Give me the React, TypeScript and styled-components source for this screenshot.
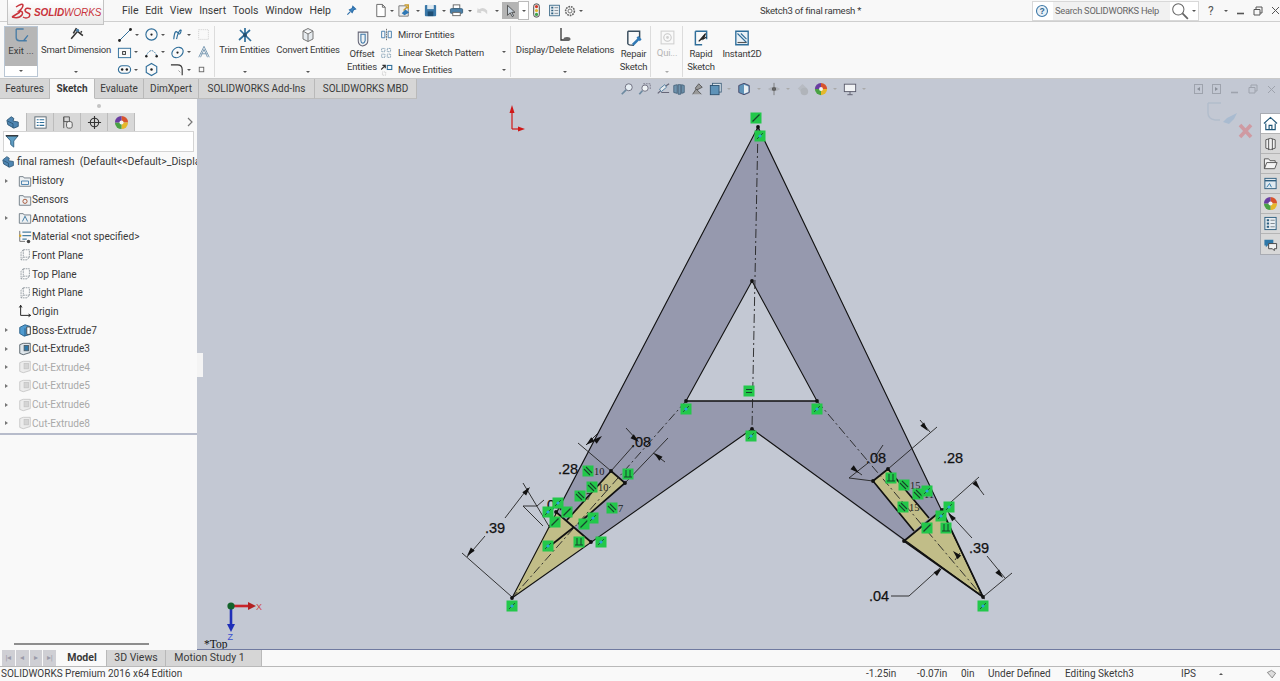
import { FC, ReactNode } from "react";
import styled, { createGlobalStyle } from "styled-components";

const GlobalStyle = createGlobalStyle`
  html, body { margin: 0; padding: 0; background: #f9f9f9; overflow: hidden; }
  body { font-family: Roboto, "Open Sans", sans-serif; font-size: 10.5px; color: #3a3a3a; }
  * { box-sizing: border-box; }
`;

const VIEW_BG = "#c3c8d3";

const Window = styled.div`
  width: 1280px;
  height: 681px;
  display: flex;
  flex-direction: column;
  overflow: hidden;
`;

/* ---------- title bar ---------- */
const TitleBar = styled.div`
  height: 22px;
  flex: none;
  display: flex;
  align-items: center;
  background: #f8f8f8;
  border-bottom: 1px solid #cfcfcf;
  position: relative;
  z-index: 2;
`;

const Logo = styled.div`
  width: 97px;
  height: 25px;
  margin: 0 0 -3px 7px;
  align-self: flex-start;
  display: flex;
  align-items: center;
  gap: 1px;
  padding-left: 3px;
  background: linear-gradient(#ffffff, #e9e9e9);
  border: 1px solid #c4c4c4;
  border-top: none;
  flex: none;
`;

const LogoText = styled.span`
  font-family: "Liberation Sans", sans-serif;
  font-size: 10px;
  font-style: italic;
  letter-spacing: -0.1px;
  color: #c9343c;
  white-space: nowrap;
  b { font-weight: 700; }
`;

const Menu = styled.div`
  display: flex;
  justify-content: space-between;
  width: 209px;
  margin-left: 18px;
  font-size: 10.5px;
  flex: none;
`;

const Quick = styled.div`
  display: flex;
  align-items: center;
  margin-left: 15px;
  flex: none;
`;

const QuickSlot = styled.span<{ $w: number; $on?: boolean; $box?: boolean; $ml?: number }>`
  width: ${(p) => p.$w}px;
  height: 17px;
  margin-left: ${(p) => p.$ml ?? 0}px;
  display: flex;
  align-items: center;
  justify-content: center;
  flex: none;
  background: ${(p) => (p.$on ? "#b4b4b4" : p.$box ? "#fff" : "transparent")};
  outline: ${(p) => (p.$box ? "1px solid #bbb" : "none")};
`;

const Caret = styled.span<{ $light?: boolean; $up?: boolean }>`
  display: inline-block;
  width: 0;
  height: 0;
  border-left: 2px solid transparent;
  border-right: 2px solid transparent;
  border-top: 2px solid ${(p) => (p.$light ? "#a9a9a9" : "#555")};
  transform: ${(p) => (p.$up ? "rotate(180deg)" : "none")};
  flex: none;
`;

const DocTitle = styled.div`
  position: absolute;
  left: 760px;
  top: 4px;
  font-size: 9.6px;
  letter-spacing: -0.25px;
  line-height: 13px;
  white-space: nowrap;
`;

const Search = styled.div`
  margin-left: auto;
  width: 167px;
  height: 20px;
  margin-right: 6px;
  display: flex;
  align-items: center;
  border: 1px solid #d8d8d8;
  background: #fff;
  flex: none;
`;

const SearchField = styled.div`
  width: 117px;
  height: 100%;
  margin-left: 3px;
  padding-left: 2px;
  background: #f1f1f1;
  color: #666;
  font-size: 9.3px;
  letter-spacing: -0.25px;
  line-height: 18px;
  white-space: nowrap;
`;

const WinButtons = styled.div`
  display: flex;
  align-items: center;
  gap: 8px;
  width: 75px;
  flex: none;
  padding-left: 3px;
  color: #555;
`;

const HelpMark = styled.span`
  font-size: 12px;
  margin-right: 2px;
`;

/* ---------- ribbon ---------- */
const Ribbon = styled.div`
  height: 57px;
  flex: none;
  display: flex;
  padding: 4px 0 1px 4px;
  background: #f9f9f9;
  border-bottom: 1px solid #c9c9c9;
`;

const ExitButton = styled.div`
  width: 34px;
  display: flex;
  flex-direction: column;
  border: 1px solid #b9c6d4;
  flex: none;
`;

const ExitTop = styled.div`
  height: 39px;
  background: #b6b6b6;
  display: flex;
  flex-direction: column;
  align-items: center;
  padding-top: 1px;
  font-size: 9.5px;
  line-height: 12px;
  white-space: nowrap;
`;

const ExitBottom = styled.div`
  flex: 1;
  background: #fff;
  display: flex;
  align-items: center;
  justify-content: center;
`;

const Tool = styled.div<{ $w: number; $gap?: number; $off?: boolean }>`
  width: ${(p) => p.$w}px;
  margin-left: ${(p) => p.$gap ?? 0}px;
  flex: none;
  display: flex;
  flex-direction: column;
  align-items: center;
  font-size: 9.5px;
  letter-spacing: -0.2px;
  line-height: 13px;
  text-align: center;
  white-space: nowrap;
  color: ${(p) => (p.$off ? "#b5b5b5" : "#3a3a3a")};
`;

const ToolIcon = styled.div<{ $h: number }>`
  height: ${(p) => p.$h}px;
  display: flex;
  align-items: flex-end;
  justify-content: center;
  flex: none;
`;

const ToolCaret = styled.div`
  margin-top: auto;
  height: 10px;
  display: flex;
  align-items: center;
  justify-content: center;
`;

const Divider = styled.div<{ $gap: number }>`
  width: 1px;
  margin: 0 ${(p) => p.$gap}px 0 3px;
  background: #dcdcdc;
  flex: none;
`;

const SmallGrid = styled.div`
  width: 94px;
  margin-left: 5px;
  flex: none;
  display: grid;
  grid-template-columns: repeat(3, 26.7px) 14px;
  grid-auto-rows: 17.5px;
  align-items: center;
`;

const SmallCell = styled.div`
  display: flex;
  align-items: center;
  gap: 2px;
`;

const Stack = styled.div`
  width: 127px;
  margin-left: 2px;
  flex: none;
  display: grid;
  grid-auto-rows: 17.5px;
  align-items: center;
`;

const StackRow = styled.div`
  display: flex;
  align-items: center;
  gap: 5px;
  font-size: 9.4px;
  letter-spacing: -0.15px;
  white-space: nowrap;
`;

const StackCaret = styled.span`
  margin-left: auto;
  margin-right: 1px;
  display: flex;
`;

/* ---------- tabs over the graphics area ---------- */
const TabRow = styled.div`
  height: 20px;
  flex: none;
  display: flex;
  align-items: flex-start;
  background: ${VIEW_BG};
`;

const CmdTab = styled.div<{ $w: number; $active?: boolean }>`
  width: ${(p) => p.$w}px;
  height: 20px;
  flex: none;
  font-size: 10px;
  line-height: 20px;
  text-align: center;
  white-space: nowrap;
  background: ${(p) => (p.$active ? "#f9f9f9" : "#d6d6d6")};
  font-weight: ${(p) => (p.$active ? 700 : 400)};
  border-right: 1px solid #b9b9b9;
  border-bottom: 1px solid ${(p) => (p.$active ? "#f9f9f9" : "#bdbdbd")};
`;

const HeadsUp = styled.div`
  display: flex;
  align-items: center;
  height: 20px;
  margin-left: 201px;
  flex: none;
`;

const HudSlot = styled.span<{ $w: number }>`
  width: ${(p) => p.$w}px;
  display: flex;
  align-items: center;
  justify-content: center;
  flex: none;
`;

const ViewButtons = styled.div`
  margin-left: 326px;
  height: 20px;
  display: flex;
  align-items: center;
  gap: 9px;
  flex: none;
`;

/* ---------- main area ---------- */
const Body = styled.div`
  flex: 1;
  min-height: 0;
  display: flex;
`;

const Sidebar = styled.div`
  width: 197px;
  flex: none;
  display: flex;
  flex-direction: column;
  background: #f9f9f9;
  position: relative;
`;

const Grip = styled.div`
  height: 14px;
  display: flex;
  align-items: center;
  justify-content: center;
  flex: none;
`;

const GripDot = styled.span`
  width: 4px;
  height: 4px;
  border-radius: 50%;
  background: #c4c4c4;
`;

const PanelTabs = styled.div`
  height: 18px;
  display: flex;
  align-items: center;
  flex: none;
`;

const PanelTab = styled.div<{ $active?: boolean }>`
  width: 27px;
  height: 18px;
  flex: none;
  display: flex;
  align-items: center;
  justify-content: center;
  background: ${(p) => (p.$active ? "#f9f9f9" : "#d8d8d8")};
  border-right: 1px solid #bcbcbc;
`;

const PanelMore = styled.div`
  margin-left: auto;
  margin-right: 4px;
  display: flex;
`;

const FilterBox = styled.div`
  height: 21px;
  margin: 0 3px 0 3px;
  padding: 2px 0 0 1px;
  background: #fff;
  border: 1px solid #d4d4d4;
  flex: none;
`;

const Tree = styled.div`
  display: grid;
  grid-template-rows: 19.6px;
  grid-auto-rows: 18.65px;
  border-bottom: 2px solid #b7bccb;
  flex: none;
`;

const TreeRow = styled.div<{ $root?: boolean; $off?: boolean }>`
  display: flex;
  align-items: center;
  padding-left: ${(p) => (p.$root ? 2 : 4)}px;
  font-size: ${(p) => (p.$root ? 10.5 : 10.1)}px;
  white-space: nowrap;
  color: ${(p) => (p.$off ? "#a9a9a9" : "#3a3a3a")};
`;

const Expander = styled.span<{ $show: boolean }>`
  width: 0;
  height: 0;
  margin-right: 9px;
  margin-left: 1px;
  flex: none;
  border-top: 2.5px solid transparent;
  border-bottom: 2.5px solid transparent;
  border-left: 3px solid ${(p) => (p.$show ? "#777" : "transparent")};
`;

const TreeIcon = styled.span<{ $root?: boolean }>`
  width: ${(p) => (p.$root ? 12 : 15)}px;
  height: 15px;
  margin-right: ${(p) => (p.$root ? 3 : 0)}px;
  display: flex;
  align-items: center;
  justify-content: center;
  flex: none;
`;

const SideScroll = styled.div`
  margin: auto 48px 5px 14px;
  height: 2px;
  background: #8e8e8e;
  flex: none;
`;

const Splitter = styled.div`
  position: absolute;
  right: -6px;
  top: 254px;
  width: 6px;
  height: 24px;
  background: #f4f4f4;
  z-index: 2;
`;

const Viewport = styled.div`
  flex: 1;
  position: relative;
  background: ${VIEW_BG};
  border-bottom: 1px solid #6f7aa0;
`;

const Canvas = styled.svg`
  display: block;
  width: 100%;
  height: 100%;
`;

const TaskPane = styled.div`
  position: absolute;
  top: 14px;
  right: 0;
  width: 20px;
  display: flex;
  flex-direction: column;
  border: 1px solid #a9acb3;
  border-right: none;
`;

const TaskButton = styled.div<{ $active?: boolean }>`
  height: 20px;
  display: flex;
  align-items: center;
  justify-content: center;
  background: ${(p) => (p.$active ? "#fff" : "#d8d8d8")};
  border-bottom: 1px solid #b5b5b5;
  &:last-child { border-bottom: none; }
`;

/* ---------- bottom ---------- */
const SheetRow = styled.div`
  height: 17px;
  flex: none;
  display: flex;
  padding-left: 2px;
  background: #f9f9f9;
  border-bottom: 1px solid #b9b9b9;
`;

const NavButtons = styled.div`
  width: 54px;
  margin-right: 2px;
  display: grid;
  grid-template-columns: repeat(4, 1fr);
  gap: 1px;
  flex: none;
`;

const NavButton = styled.div`
  background: #cfcfd4;
  color: #9a9aa8;
  font-size: 8px;
  line-height: 15px;
  text-align: center;
`;

const SheetTab = styled.div<{ $w: number; $active?: boolean; $pr?: number }>`
  width: ${(p) => p.$w}px;
  padding-right: ${(p) => p.$pr ?? 0}px;
  flex: none;
  text-align: center;
  font-size: 10.5px;
  line-height: 16px;
  white-space: nowrap;
  font-weight: ${(p) => (p.$active ? 700 : 400)};
  background: ${(p) => (p.$active ? "#f9f9f9" : "#d6d6d6")};
  border-right: 1px solid #b9b9b9;
`;

const StatusBar = styled.div`
  height: 14px;
  flex: none;
  display: flex;
  align-items: center;
  font-size: 10px;
  line-height: 14px;
  background: #f9f9f9;
  white-space: nowrap;
`;

const StatusCell = styled.span<{ $x: number }>`
  position: absolute;
  left: ${(p) => p.$x}px;
  display: flex;
  align-items: center;
`;

const StatusTrack = styled.div`
  position: relative;
  flex: 1;
  height: 14px;
  display: flex;
  align-items: center;
  padding-left: 1px;
`;

/* ---------- small drawings ---------- */
type IconProps = { size?: number };

const Svg = styled.svg`
  display: block;
  flex: none;
`;

const S: FC<{ size?: number; children: ReactNode }> = ({ size = 16, children }) => (
  <Svg width={size} height={size} viewBox="0 0 16 16" fill="none">
    {children}
  </Svg>
);

const DsMark = () => (
  <Svg width="22" height="20" viewBox="0 0 22 20">
    <path d="M1 15 L9 10 M5 5 Q11 1 12 3 Q12 6 8 9 Q13 9 11 13 Q8 17 1 15" stroke="#c9343c" strokeWidth="1.5" fill="none" />
    <path d="M20 7 Q15 5 14 8 Q14 10 17 11 Q20 12 18 15 Q15 17 12 15" stroke="#c9343c" strokeWidth="1.5" fill="none" />
  </Svg>
);

const Pin = () => (
  <S size={11}><path d="M10 2 L14 6 L11 7 L9 11 L5 7 L9 5 Z M6 10 L2 14" stroke="#2c6da8" strokeWidth="1.6" fill="#3f88c5" /></S>
);
const NewDoc = () => (
  <S size={15}><path d="M4 1.5 H10 L13 4.5 V14.5 H4 Z M10 1.5 V4.5 H13" stroke="#666" fill="#fff" /></S>
);
const OpenDoc = () => (
  <S size={15}><path d="M2 3 H9 L12 6 V14 H2 Z" stroke="#777" fill="#eee" /><path d="M7 8 L11 4 M8 2 H12 V6" stroke="#c79a2c" strokeWidth="1.6" /><path d="M5 11 L9 7 L13 10 L8 13 Z" fill="#2f78b5" /></S>
);
const Save = () => (
  <S size={15}><rect x="2" y="2" width="12" height="12" rx="1" fill="#3a78a8" /><rect x="4.5" y="2" width="7" height="4.5" fill="#dfe9f0" /><rect x="5" y="9" width="6" height="5" fill="#1f4f75" /></S>
);
const Printer = () => (
  <S size={15}><rect x="4.5" y="2" width="7" height="4" fill="#fff" stroke="#666" /><rect x="1.5" y="6" width="13" height="5" rx="1" fill="#4a7fa8" stroke="#3d6480" /><rect x="4" y="10" width="8" height="3.5" fill="#fff" stroke="#666" /></S>
);
const Undo = () => (
  <S size={15}><path d="M4 7 Q9 3 13 8 L13 12 Q9 7 6 9 L7 11 L2 10 L3 5 Z" fill="#d4d4d4" /></S>
);
const Cursor = () => (
  <S size={14}><path d="M4 1.5 V13 L7 10 L9.5 14.5 L11 13.5 L8.8 9.5 H12.5 Z" fill="#c9d3dc" stroke="#3b3b3b" strokeWidth="0.9" /></S>
);
const Traffic = () => (
  <S size={15}><rect x="5" y="1" width="6" height="14" rx="2.5" fill="#f2f2f2" stroke="#444" /><circle cx="8" cy="3.8" r="1.7" fill="#d23a2a" /><circle cx="8" cy="8" r="1.7" fill="#e3b52a" /><circle cx="8" cy="12.2" r="1.7" fill="#3fa34a" /></S>
);
const ListDoc: FC<IconProps> = ({ size = 15 }) => (
  <S size={size}><rect x="2" y="1.5" width="12" height="13" fill="#e9eef2" stroke="#2d5f80" /><path d="M4 4.5 H6.5 M4 8 H6.5 M4 11.5 H6.5" stroke="#2d5f80" strokeWidth="2" /><path d="M8 4.5 H12.5 M8 8 H12.5 M8 11.5 H12.5" stroke="#77838c" /></S>
);
const Gear = () => (
  <S size={14}><circle cx="8" cy="8" r="5" stroke="#666" strokeWidth="1.8" strokeDasharray="2 1" /><circle cx="8" cy="8" r="2.3" stroke="#666" /></S>
);
const HelpDot = () => (
  <Svg width="14" height="14" viewBox="0 0 14 14">
    <circle cx="7" cy="7" r="5.5" fill="#e8f0f6" stroke="#3f79a8" strokeWidth="1.1" />
    <text x="7" y="10" textAnchor="middle" fontSize="8.5" fontWeight="700" fontFamily="Liberation Sans, sans-serif" fill="#2d6594">?</text>
  </Svg>
);
const Loupe = () => (
  <S size={18}><circle cx="6.5" cy="6.5" r="5" stroke="#666" strokeWidth="0.9" /><path d="M10.2 10.2 L15 15" stroke="#666" strokeWidth="1.6" /></S>
);
const ExitIcon = () => (
  <S size={17}><path d="M3 1 V9 Q3 12 6 12 H13 M3 1 H10" stroke="#4b7ea6" strokeWidth="1.3" /><path d="M14 7 L10 12" stroke="#3f78a8" strokeWidth="1.2" /></S>
);
const DimIcon = () => (
  <S size={17}><path d="M3 12 L9 5 L14 9 M5 7 L8 2 M12 5 L13 6" stroke="#333" strokeWidth="1.5" /><circle cx="9" cy="4" r="1.5" fill="#4b7ea6" /></S>
);
const TrimIcon = () => (
  <S size={16}><path d="M2 13 L13 3 M3 3 L14 14 M8 1 V15" stroke="#2f6e9a" strokeWidth="1.7" /><circle cx="8" cy="8" r="2" fill="#244f70" /></S>
);
const ConvertIcon = () => (
  <S size={16}><path d="M3 4 L8 1.5 L13 4 V12 L8 14.5 L3 12 Z M8 7 V14.5 M3 4 L8 7 L13 4" stroke="#777" fill="#e6ebef" /></S>
);
const OffsetIcon = () => (
  <S size={17}><path d="M4 2 H13 V10 Q13 14 8 15 Q4 14 4 10 Z" stroke="#667" fill="#eef1f3" /><path d="M6.5 4 H10.5 V10 Q10 12 8.5 12.5 Q6.5 12 6.5 10 Z" stroke="#3f78a8" /></S>
);
const MirrorIcon = () => (
  <S size={13}><path d="M8 1 V15" stroke="#555" strokeDasharray="2 1" /><path d="M2 4 H6 V12 H2 Z M10 4 H14 V12 H10 Z" stroke="#3f78a8" strokeWidth="1.1" /></S>
);
const PatternIcon = () => (
  <S size={13}><path d="M2 3 H6 V7 H2 Z M9 3 H13 V7 H9 Z M2 10 H6 V14 H2 Z M9 10 H13 V14 H9 Z" stroke="#6d8fa8" strokeDasharray="1.3 .7" /></S>
);
const MoveIcon = () => (
  <S size={13}><path d="M1.5 8 L6 3.5 M3 3 H6.5 V6.5" stroke="#333" strokeWidth="1.4" /><rect x="9" y="3" width="5.5" height="5" stroke="#2f6e9a" strokeWidth="1.3" /><path d="M3 11 H7 V15 H3 Z" stroke="#bbb" strokeDasharray="1 1" /></S>
);
const RelationIcon = () => (
  <S size={16}><path d="M4 1 V13 H11" stroke="#333" strokeWidth="1.3" /><ellipse cx="10" cy="12" rx="3.5" ry="2" fill="#666" /></S>
);
const RepairIcon = () => (
  <S size={18}><path d="M2.5 2 H13 V8 M2.5 2 V13 Q3 14.5 8 14.5" stroke="#3a4e5e" strokeWidth="1.3" /><path d="M7 14 L12 9 M11 7 L14 10" stroke="#2f78b5" strokeWidth="2.2" /></S>
);
const QuickIcon = () => (
  <S size={17}><rect x="2" y="2" width="12" height="12" stroke="#d0d0d0" /><circle cx="8" cy="8" r="3.5" stroke="#c8c8c8" /><circle cx="8" cy="8" r="1.3" fill="#d0d0d0" /></S>
);
const RapidIcon = () => (
  <S size={18}><path d="M3 2 H13 V9 M3 2 V14 H9" stroke="#2f6e9a" strokeWidth="1.3" /><path d="M6 11 L12 4 L10 9 L13 7" fill="#222" stroke="#222" /></S>
);
const InstantIcon = () => (
  <S size={18}><path d="M2.5 2 H13.5 V14 H2.5 Z" stroke="#2f6e9a" strokeWidth="1.2" fill="#eaf1f6" /><path d="M4 4 L12 12 M7 4 L12 9" stroke="#2f6e9a" /><path d="M4 12 H12" stroke="#555" /></S>
);

const SmallIcons: { node: ReactNode; caret?: boolean }[] = [
  { caret: true, node: <S size={16}><path d="M2 14 L14 2" stroke="#2f6e9a" strokeWidth="1" /><circle cx="2.5" cy="13.5" r="1.4" fill="#222" /><circle cx="13.5" cy="2.5" r="1.4" fill="#222" /></S> },
  { caret: true, node: <S size={15}><circle cx="8" cy="8" r="6" stroke="#2f6e9a" strokeWidth="1.2" /><circle cx="8" cy="8" r="1.2" fill="#222" /></S> },
  { caret: true, node: <S size={15}><path d="M4 13 Q5 2 8 6 T12 3 M7 13 Q9 3 12 3" stroke="#2f6e9a" strokeWidth="1.2" /></S> },
  { node: <S size={13}><rect x="2" y="2" width="12" height="12" stroke="#cfcfcf" strokeDasharray="1.5 1" /></S> },
  { caret: true, node: <S size={15}><rect x="1.5" y="3.5" width="13" height="10" stroke="#2f6e9a" /><rect x="6" y="7" width="3" height="3" stroke="#333" /></S> },
  { caret: true, node: <S size={15}><path d="M2 12 Q8 0 14 12" stroke="#2f6e9a" strokeDasharray="2 1" /><circle cx="2.5" cy="12" r="1.3" fill="#222" /><circle cx="13.5" cy="12" r="1.3" fill="#222" /></S> },
  { caret: true, node: <S size={15}><ellipse cx="8" cy="8" rx="6.5" ry="5" transform="rotate(-35 8 8)" stroke="#2f6e9a" strokeWidth="1.2" /><circle cx="8" cy="8" r="1.2" fill="#222" /></S> },
  { node: <S size={14}><path d="M2 14 L8 1.5 L14 14 M5 10 H11 M4 14 L8 5 L12 14" stroke="#7b9ab3" strokeWidth="1.1" /></S> },
  { caret: true, node: <S size={15}><rect x="1.5" y="4" width="13" height="8" rx="4" stroke="#2f6e9a" strokeWidth="1.2" /><circle cx="5.5" cy="8" r="1.3" fill="#222" /><circle cx="10.5" cy="8" r="1.3" fill="#222" /></S> },
  { node: <S size={15}><path d="M8 1.5 L13.6 4.8 V11.2 L8 14.5 L2.4 11.2 V4.8 Z" stroke="#2f6e9a" strokeWidth="1.2" /><circle cx="8" cy="8" r="1.3" fill="#222" /></S> },
  { caret: true, node: <S size={15}><path d="M1 3 H8 Q13 3 13 8 V14" stroke="#333" strokeWidth="1.2" /><path d="M9 9 L11 11" stroke="#999" /></S> },
  { node: <S size={9}><rect x="4" y="4" width="8" height="8" stroke="#666" strokeWidth="1.6" /></S> },
];

const FolderIcon: FC<{ mark: ReactNode }> = ({ mark }) => (
  <S size={14}>
    <path d="M1.5 14 V3 H6 L7 4.5 H14.5 V14 Z" stroke="#6a7680" fill="#eef1f3" />
    {mark}
  </S>
);
const MaterialIcon = () => (
  <S size={14}><path d="M5 2.5 H15 M5 6.5 H15 M5 10.5 H10" stroke="#4a7fa0" strokeWidth="1.3" /><path d="M2 1 V13 H8" stroke="#666" /><circle cx="2.5" cy="6.5" r="1.4" fill="#d8a92a" /><circle cx="12" cy="13" r="2" fill="#444" /></S>
);
const PlaneIcon = () => (
  <S size={14}><path d="M6 2 H13 V10.5 L10.5 13.5 H3.5 V5 Z M6 2 V10.5 H13 M6 10.5 L3.5 13.5" stroke="#8d959c" strokeDasharray="2 .8" fill="#fbfbfb" /></S>
);
const OriginIcon = () => (
  <S size={14}><path d="M3 1.5 V13 H14 M1.5 4 L3 1.5 L4.5 4 M12 11.5 L14.5 13 L12 14.5" stroke="#222" strokeWidth="1.1" /></S>
);
const BossIcon = () => (
  <S size={14}><path d="M2 5 L8 2 L14 4 V13 L7 15 L2 12 Z" fill="#4f9bd0" stroke="#235a85" /><path d="M8 6 V15" stroke="#235a85" /><path d="M10 4.5 H14 V13 H10 Z" fill="#fff" stroke="#444" /></S>
);
const CutIcon: FC<{ off?: boolean }> = ({ off }) => {
  const c = off ? "#c6c6c6" : "#4e5a62";
  return (
    <S size={14}>
      <path d="M2 3 L6 1.5 H14 V12 L6 14.5 L2 13 Z" fill={off ? "#ececec" : "#dfe6eb"} stroke={c} />
      <rect x="7" y="4" width="5" height="6" fill={off ? "#d4d4d4" : "#2f78a8"} stroke={c} />
    </S>
  );
};
const PartIcon: FC<{ size?: number }> = ({ size = 13 }) => (
  <S size={size}><path d="M1 6 L6 2 L9 4 L8 7 L14 8 V13 L9 15 L2 11 Z" fill="#4f86b2" stroke="#2d5675" /><path d="M2 7 L8 10 V15" stroke="#2d5675" /></S>
);
const FunnelIcon = () => (
  <S size={14}><path d="M1 2 H15 L10 8 V15 L6.5 12 V8 Z" fill="#5f9ec4" stroke="#2f5f80" /><path d="M1 2 H15" stroke="#333" strokeWidth="1.5" /></S>
);
const ConfigIcon = () => (
  <S size={15}><rect x="2" y="2" width="12" height="12" stroke="#5b6a75" fill="#fff" /><path d="M4 5 H6 M4 8 H6 M4 11 H6 M7 5 H12 M7 8 H12 M7 11 H12" stroke="#2d6f9a" strokeWidth="1.2" /></S>
);
const PropsIcon = () => (
  <S size={15}><path d="M4 2 H10 V7 H4 Z M4 2 V14" stroke="#555" /><rect x="7" y="7" width="6" height="7" rx="2" stroke="#555" fill="#eee" /></S>
);
const TargetIcon = () => (
  <S size={15}><circle cx="8" cy="8" r="4.5" stroke="#333" strokeWidth="1.2" /><path d="M8 1 V15 M1 8 H15" stroke="#333" strokeWidth="1.2" /></S>
);
const ColorBall: FC<{ size?: number }> = ({ size = 15 }) => (
  <Svg width={size} height={size} viewBox="0 0 16 16">
    <path d="M8 8 L8 1 A7 7 0 0 1 15 8 Z" fill="#d8532c" />
    <path d="M8 8 L15 8 A7 7 0 0 1 8 15 Z" fill="#e5b82b" />
    <path d="M8 8 L8 15 A7 7 0 0 1 1 8 Z" fill="#4aa243" />
    <path d="M8 8 L1 8 A7 7 0 0 1 8 1 Z" fill="#6a3ea1" />
    <circle cx="8" cy="8" r="2.2" fill="#f4f4f4" />
  </Svg>
);

const WinMin: FC<{ c: string }> = ({ c }) => (
  <Svg width="9" height="9" viewBox="0 0 9 9"><path d="M1 7.5 H8" stroke={c} strokeWidth="1.6" /></Svg>
);
const WinMax: FC<{ c: string }> = ({ c }) => (
  <Svg width="10" height="10" viewBox="0 0 10 10" fill="none"><path d="M1 3.5 H7 V9 H1 Z M3 3.5 V1 H9 V7 H7" stroke={c} /></Svg>
);
const WinX: FC<{ c: string }> = ({ c }) => (
  <Svg width="9" height="9" viewBox="0 0 9 9"><path d="M1 1 L8 8 M8 1 L1 8" stroke={c} /></Svg>
);
const PaneBtn: FC<{ right?: boolean }> = ({ right }) => (
  <Svg width="9" height="10" viewBox="0 0 9 10" fill="none">
    <rect x=".5" y=".5" width="8" height="9" stroke="#9ea3ad" />
    <path d={right ? "M3 3 L6 5 L3 7 Z" : "M6 3 L3 5 L6 7 Z"} fill="#8a8f99" />
  </Svg>
);

const HudIcons: { w: number; node: ReactNode }[] = [
  { w: 18, node: <S size={14}><circle cx="10" cy="6" r="4" stroke="#667" fill="#e6eef4" /><path d="M7 9 L2 14" stroke="#6d8aa0" strokeWidth="2" /></S> },
  { w: 18, node: <S size={14}><path d="M6 2 H14 V9" stroke="#778" strokeDasharray="2 1" /><circle cx="8" cy="7" r="3.6" stroke="#667" fill="#eef2f5" /><path d="M5 10 L1.5 14" stroke="#6d8aa0" strokeWidth="2" /></S> },
  { w: 17, node: <S size={14}><path d="M2 13 L12 4 L15 2 M6 12 H15" stroke="#667" strokeWidth="1.4" /><path d="M4 8 L10 3 L12 6 L6 11 Z" fill="#e4e8ec" stroke="#4d7c9e" /></S> },
  { w: 16, node: <S size={14}><path d="M2 4 L6 3 V13 L2 12 Z M7 3 H10 V14 H7 Z M11 3 L14 4 V12 L11 13 Z" fill="#6f93ad" stroke="#33536d" strokeWidth=".8" /></S> },
  { w: 20, node: <S size={14}><path d="M3 14 L7 8 L13 14 M10 2 L14 6 L8 9 L6 7 Z" fill="#999" stroke="#555" /></S> },
  { w: 17, node: <S size={14}><rect x="4" y="1.5" width="10" height="10" fill="#d7e1e8" stroke="#3f5f7a" /><rect x="1.5" y="4" width="10" height="10.5" fill="#5f93b8" stroke="#2b4f6e" /></S> },
  { w: 9, node: <Caret $light /> },
  { w: 21, node: <S size={14}><path d="M2 4 L8 1.5 L14 4 V12 L8 14.5 L2 12 Z" fill="#5f93b8" stroke="#446" /><path d="M8 3 L13 5 V11.5 L8 13.5 Z" fill="#e9eef2" /></S> },
  { w: 9, node: <Caret $light /> },
  { w: 21, node: <S size={14}><path d="M1 8 Q8 3 15 8 Q8 13 1 8 Z" fill="#b0b4bb" /><circle cx="8" cy="8" r="2.4" fill="#555" /><path d="M8 1 V15" stroke="#777" /></S> },
  { w: 8, node: <Caret $light /> },
  { w: 20, node: <S size={15}><path d="M3 7 L8 2 L13 7 L8 12 Z" fill="#b7bbc2" /><circle cx="10" cy="10" r="4" fill="#b0b4ba" /></S> },
  { w: 17, node: <ColorBall size={14} /> },
  { w: 11, node: <Caret $light /> },
  { w: 19, node: <S size={14}><rect x="1.5" y="2.5" width="13" height="8.5" fill="#f1f3f5" stroke="#556" /><path d="M8 11 V14 M5 14.5 H11" stroke="#556" /></S> },
  { w: 9, node: <Caret $light /> },
];

/* ---------- the sketch ---------- */
type Mark = [number, number, "co" | "par" | "perp" | "diag" | "mid", string?];

const MARKS: Mark[] = [
  [756, 118, "diag"], [760, 136, "co"], [749, 391, "mid"], [751, 436, "co"],
  [686, 409, "co"], [817, 409, "co"], [512, 606, "co"], [983, 606, "co"],
  [588, 471, "par", "10"], [592, 487, "par", "10"], [580, 496, "par", "7"],
  [628, 474, "perp"], [612, 508, "par", "7"], [558, 503, "co"], [548, 512, "co"],
  [567, 512, "diag"], [555, 522, "diag"], [584, 524, "diag"], [593, 518, "co"],
  [548, 546, "co"], [579, 542, "perp"], [601, 542, "co"],
  [891, 478, "perp"], [904, 485, "par", "15"], [918, 494, "par", "11"], [927, 491, "co"],
  [903, 507, "par", "15"], [949, 507, "co"], [941, 516, "co"], [927, 528, "diag"], [946, 528, "perp"],
];

const RelationMark: FC<{ m: Mark }> = ({ m: [x, y, kind, label] }) => (
  <g>
    <rect x={x - 5.5} y={y - 5.5} width="11" height="11" fill="#22c84a" />
    {kind === "co" && (
      <>
        <path d={`M${x - 3} ${y + 3} L${x + 3} ${y - 3}`} stroke="#1c5a3a" strokeWidth="1" />
        <circle cx={x} cy={y} r="1.6" fill="#27a4d8" />
      </>
    )}
    {kind === "diag" && <path d={`M${x - 3.5} ${y + 3.5} L${x + 3.5} ${y - 3.5}`} stroke="#16452c" strokeWidth="1.2" />}
    {kind === "par" && (
      <path d={`M${x - 4} ${y - 2} L${x + 2} ${y + 4} M${x - 2} ${y - 4} L${x + 4} ${y + 2}`} stroke="#16452c" strokeWidth="1.1" />
    )}
    {kind === "perp" && <path d={`M${x - 4} ${y + 3} H${x + 4} M${x - 2} ${y + 3} V${y - 4} M${x + 2} ${y + 3} V${y - 4}`} stroke="#16452c" strokeWidth="1" />}
    {kind === "mid" && <path d={`M${x - 3} ${y - 1.5} H${x + 3} M${x - 3} ${y + 1.5} H${x + 3}`} stroke="#16452c" strokeWidth="1.2" />}
    {label && (
      <text x={x + 6} y={y + 3.5} fontFamily="Liberation Serif, serif" fontSize="10.5" fill="#222">
        {label}
      </text>
    )}
  </g>
);

const DIM_LINES = [
  "M512 597 L462 553", "M550 528 L523 483", "M467 557 L485 536", "M505 518 L528 488",
  "M611 471 L578 443", "M586 445 L598 433", "M611 471 L634 445", "M625 483 L668 438",
  "M626 428 L637 440", "M653 453 L665 462",
  "M523 506 L537 506 L544 500", "M523 506 L543 526",
  "M888 469 L937 427", "M920 420 L930 432", "M873 481 L849 478", "M849 478 L868 463",
  "M855 470 L862 475", "M883 445 L875 457",
  "M942 510 L979 477", "M983 597 L1012 573", "M948 512 L972 538", "M987 556 L1005 578",
  "M975 483 L984 495",
  "M891 596 L909 596 L940 568", "M955 560 L960 553",
];

const Arrow: FC<{ x: number; y: number; a: number }> = ({ x, y, a }) => (
  <path d="M0 0 L-9 -2.5 L-9 2.5 Z" transform={`translate(${x} ${y}) rotate(${a})`} fill="#111" />
);

const DimText: FC<{ x: number; y: number; children: string }> = ({ x, y, children }) => (
  <text x={x} y={y} textAnchor="middle" fontFamily="Liberation Sans, sans-serif" fontSize="14.5" fill="#111" stroke="#111" strokeWidth="0.25">
    {children}
  </text>
);

const Sketch = () => (
  <Canvas viewBox="197 99 1083 550">
    {/* model body, grey, with the triangle hole */}
    <path
      fillRule="evenodd"
      fill="#9699ae"
      d="M758 127 L942 510 L904 541 L752 429 L591 542 L556 512 Z M752 281 L686 401 L817 401 Z"
    />
    <path fill="#c1bd88" d="M512 598 L556 512 L591 542 Z M983 597 L942 510 L904 541 Z" />
    <path fill="#c1bd88" d="M611 471 L625 483 L574 527 L567 520 Z M888 469 L873 481 L914 531 L929 518 Z" />

    <g stroke="#111" fill="none" strokeWidth="1.1">
      <path d="M758 127 L512 598 L752 429 M758 127 L983 597 L752 429" />
      <path d="M752 281 L686 401 M752 281 L817 401" />
    </g>
    <g stroke="#111" fill="none" strokeWidth="1.7">
      <path d="M686 401 H817" />
      <path d="M556 512 L591 542 M611 471 L625 483 L578 524 M611 471 L567 520" />
      <path d="M942 510 L904 541 M888 469 L873 481 L914 531 M888 469 L929 518" />
      <path d="M904 541 L983 597 L942 510" />
      <path d="M550 546 L574 527" />
    </g>
    <g stroke="#222" fill="none" strokeWidth="0.9" strokeDasharray="9 3 2 3">
      <path d="M758 127 L752 429" />
      <path d="M686 401 L512 598" />
      <path d="M817 401 L983 597" />
    </g>

    <g stroke="#222" fill="none" strokeWidth="0.9">
      {DIM_LINES.map((d) => (
        <path key={d} d={d} />
      ))}
    </g>
    <Arrow x={467} y={556} a={130} />
    <Arrow x={530} y={487} a={-50} />
    <Arrow x={586} y={445} a={140} />
    <Arrow x={602} y={436} a={-40} />
    <Arrow x={639} y={442} a={40} />
    <Arrow x={654} y={453} a={220} />
    <Arrow x={928} y={431} a={50} />
    <Arrow x={980} y={489} a={50} />
    <Arrow x={948} y={513} a={228} />
    <Arrow x={1003} y={578} a={50} />
    <Arrow x={942} y={568} a={-42} />
    <Arrow x={953} y={551} a={-135} />
    <Arrow x={859} y={473} a={40} />

    {[[512, 598], [983, 597], [758, 127], [752, 429], [686, 401], [817, 401], [611, 471], [625, 483], [888, 469], [873, 481], [942, 510], [904, 541], [591, 542], [556, 512], [752, 281]].map(([x, y]) => (
      <circle key={`${x}-${y}`} cx={x} cy={y} r="1.9" fill="#111" />
    ))}

    {/* this one sits under the relation marks in the picture */}
    <DimText x={553} y={510}>.04</DimText>

    {MARKS.map((m) => (
      <RelationMark key={`${m[0]}-${m[1]}`} m={m} />
    ))}

    <DimText x={495} y={533}>.39</DimText>
    <DimText x={568} y={474}>.28</DimText>
    <DimText x={641} y={447}>.08</DimText>
    <DimText x={876} y={463}>.08</DimText>
    <DimText x={953} y={463}>.28</DimText>
    <DimText x={979} y={553}>.39</DimText>
    <DimText x={879} y={601}>.04</DimText>

    {/* sketch origin */}
    <path d="M512 129 V110" stroke="#d01818" strokeWidth="1.2" />
    <path d="M512 105 L509.5 113 H514.5 Z" fill="#d01818" />
    <path d="M512 129 H520" stroke="#d01818" strokeWidth="1.2" />
    <path d="M525 129 L518 126.5 V131.5 Z" fill="#d01818" />

    {/* reference triad */}
    <path d="M232 606 H250" stroke="#c8242a" strokeWidth="2.6" />
    <path d="M256 606 L248 602 V610 Z" fill="#b32020" />
    <path d="M231 607 V625" stroke="#1f2fb8" strokeWidth="2.6" />
    <path d="M231 632 L227 624 H235 Z" fill="#1f2fb8" />
    <circle cx="231" cy="606" r="3.6" fill="#13632a" />
    <text x="256" y="610" fontFamily="Liberation Sans, sans-serif" fontSize="9" fill="#d04848">X</text>
    <text x="227.5" y="640" fontFamily="Liberation Sans, sans-serif" fontSize="9" fill="#3a50d0">Z</text>
    <text x="204" y="648" fontFamily="Liberation Serif, serif" fontSize="11.5" fill="#111">*Top</text>

    {/* faint confirmation corner */}
    <path d="M1208 103 V113 Q1208 119 1215 120 H1220 M1208 103 H1221" stroke="#b2bdcc" strokeWidth="1.4" fill="none" />
    <path d="M1237 113 L1227 118 L1223 122 L1229 124 L1234 119 Z" fill="#a9bbd0" />
    <path d="M1240 125 L1251 137 M1251 125 L1240 137" stroke="#cf9aa2" strokeWidth="3.6" />
  </Canvas>
);

/* ---------- data ---------- */
const MENUS = ["File", "Edit", "View", "Insert", "Tools", "Window", "Help"];
const COMMAND_TABS = [
  { name: "Features", w: 50 },
  { name: "Sketch", w: 45, active: true },
  { name: "Evaluate", w: 49 },
  { name: "DimXpert", w: 55 },
  { name: "SOLIDWORKS Add-Ins", w: 116 },
  { name: "SOLIDWORKS MBD", w: 102 },
];

const TREE = [
  { label: "History", arrow: true, icon: <FolderIcon mark={<path d="M4 8 H12 V12 H4 Z" stroke="#3f78a8" />} /> },
  { label: "Sensors", icon: <FolderIcon mark={<circle cx="8" cy="9.5" r="2.4" stroke="#a04a2a" />} /> },
  { label: "Annotations", arrow: true, icon: <FolderIcon mark={<path d="M5 12 L8 6 L11 12" stroke="#2f6e9a" />} /> },
  { label: "Material <not specified>", icon: <MaterialIcon /> },
  { label: "Front Plane", icon: <PlaneIcon /> },
  { label: "Top Plane", icon: <PlaneIcon /> },
  { label: "Right Plane", icon: <PlaneIcon /> },
  { label: "Origin", icon: <OriginIcon /> },
  { label: "Boss-Extrude7", arrow: true, icon: <BossIcon /> },
  { label: "Cut-Extrude3", arrow: true, icon: <CutIcon /> },
  { label: "Cut-Extrude4", arrow: true, off: true, icon: <CutIcon off /> },
  { label: "Cut-Extrude5", arrow: true, off: true, icon: <CutIcon off /> },
  { label: "Cut-Extrude6", arrow: true, off: true, icon: <CutIcon off /> },
  { label: "Cut-Extrude8", arrow: true, off: true, icon: <CutIcon off /> },
];

const App = () => (
  <Window>
    <GlobalStyle />
    <TitleBar>
      <Logo>
        <DsMark />
        <LogoText><b>SOLID</b>WORKS</LogoText>
      </Logo>
      <Menu>
        {MENUS.map((m) => (
          <span key={m}>{m}</span>
        ))}
      </Menu>
      <QuickSlot $w={11} $ml={15}><Pin /></QuickSlot>
      <Quick>
        <QuickSlot $w={16}><NewDoc /></QuickSlot>
        <QuickSlot $w={8}><Caret /></QuickSlot>
        <QuickSlot $w={17}><OpenDoc /></QuickSlot>
        <QuickSlot $w={9}><Caret /></QuickSlot>
        <QuickSlot $w={17}><Save /></QuickSlot>
        <QuickSlot $w={9}><Caret /></QuickSlot>
        <QuickSlot $w={17}><Printer /></QuickSlot>
        <QuickSlot $w={9}><Caret /></QuickSlot>
        <QuickSlot $w={17}><Undo /></QuickSlot>
        <QuickSlot $w={11}><Caret /></QuickSlot>
        <QuickSlot $w={17} $on><Cursor /></QuickSlot>
        <QuickSlot $w={9} $box><Caret /></QuickSlot>
        <QuickSlot $w={17}><Traffic /></QuickSlot>
        <QuickSlot $w={18}><ListDoc size={13} /></QuickSlot>
        <QuickSlot $w={14}><Gear /></QuickSlot>
        <QuickSlot $w={8}><Caret /></QuickSlot>
      </Quick>
      <DocTitle>Sketch3 of final ramesh *</DocTitle>
      <Search>
        <QuickSlot $w={17}><HelpDot /></QuickSlot>
        <SearchField>Search SOLIDWORKS Help</SearchField>
        <QuickSlot $w={20}><Loupe /></QuickSlot>
        <QuickSlot $w={8}><Caret /></QuickSlot>
      </Search>
      <WinButtons>
        <HelpMark>?</HelpMark>
        <Caret />
        <WinMin c="#555" />
        <WinMax c="#555" />
        <WinX c="#555" />
      </WinButtons>
    </TitleBar>

    <Ribbon>
      <ExitButton>
        <ExitTop>
          <ExitIcon />
          Exit ...
        </ExitTop>
        <ExitBottom><Caret /></ExitBottom>
      </ExitButton>
      <Tool $w={72} $gap={2}>
        <ToolIcon $h={17}><DimIcon /></ToolIcon>
        Smart Dimension
        <ToolCaret><Caret /></ToolCaret>
      </Tool>
      <SmallGrid>
        {SmallIcons.map((icon, i) => (
          <SmallCell key={i}>
            {icon.node}
            {icon.caret && <Caret />}
          </SmallCell>
        ))}
      </SmallGrid>
      <Divider $gap={4} />
      <Tool $w={51}>
        <ToolIcon $h={17}><TrimIcon /></ToolIcon>
        Trim Entities
        <ToolCaret><Caret /></ToolCaret>
      </Tool>
      <Tool $w={66} $gap={5}>
        <ToolIcon $h={17}><ConvertIcon /></ToolIcon>
        Convert Entities
        <ToolCaret><Caret /></ToolCaret>
      </Tool>
      <Tool $w={32} $gap={5}>
        <ToolIcon $h={21}><OffsetIcon /></ToolIcon>
        Offset
        <br />
        Entities
      </Tool>
      <Stack>
        <StackRow><MirrorIcon /> Mirror Entities</StackRow>
        <StackRow><PatternIcon /> Linear Sketch Pattern <StackCaret><Caret /></StackCaret></StackRow>
        <StackRow><MoveIcon /> Move Entities <StackCaret><Caret /></StackCaret></StackRow>
      </Stack>
      <Divider $gap={4} />
      <Tool $w={100}>
        <ToolIcon $h={17}><RelationIcon /></ToolIcon>
        Display/Delete Relations
        <ToolCaret><Caret /></ToolCaret>
      </Tool>
      <Tool $w={27} $gap={5}>
        <ToolIcon $h={21}><RepairIcon /></ToolIcon>
        Repair
        <br />
        Sketch
      </Tool>
      <Divider $gap={4} />
      <Tool $w={24} $off>
        <ToolIcon $h={20}><QuickIcon /></ToolIcon>
        Qui...
        <ToolCaret><Caret $light /></ToolCaret>
      </Tool>
      <Divider $gap={4} />
      <Tool $w={28}>
        <ToolIcon $h={21}><RapidIcon /></ToolIcon>
        Rapid
        <br />
        Sketch
      </Tool>
      <Tool $w={44} $gap={5}>
        <ToolIcon $h={21}><InstantIcon /></ToolIcon>
        Instant2D
      </Tool>
    </Ribbon>

    <TabRow>
      {COMMAND_TABS.map((t) => (
        <CmdTab key={t.name} $w={t.w} $active={t.active}>{t.name}</CmdTab>
      ))}
      <HeadsUp>
        {HudIcons.map((h, i) => (
          <HudSlot key={i} $w={h.w}>{h.node}</HudSlot>
        ))}
      </HeadsUp>
      <ViewButtons>
        <PaneBtn />
        <PaneBtn right />
        <WinMin c="#9ea3ad" />
        <WinMax c="#9ea3ad" />
        <WinX c="#9ea3ad" />
      </ViewButtons>
    </TabRow>

    <Body>
      <Sidebar>
        <Grip><GripDot /></Grip>
        <PanelTabs>
          <PanelTab $active><PartIcon size={14} /></PanelTab>
          <PanelTab><ConfigIcon /></PanelTab>
          <PanelTab><PropsIcon /></PanelTab>
          <PanelTab><TargetIcon /></PanelTab>
          <PanelTab><ColorBall /></PanelTab>
          <PanelMore>
            <svg width="6" height="10" viewBox="0 0 6 10" fill="none"><path d="M1 1 L5 5 L1 9" stroke="#777" strokeWidth="1.2" /></svg>
          </PanelMore>
        </PanelTabs>
        <FilterBox><FunnelIcon /></FilterBox>
        <Tree>
          <TreeRow $root>
            <TreeIcon $root><PartIcon /></TreeIcon>
            final ramesh&nbsp; (Default&lt;&lt;Default&gt;_Displa
          </TreeRow>
          {TREE.map((r) => (
            <TreeRow key={r.label} $off={r.off}>
              <Expander $show={!!r.arrow} />
              <TreeIcon>{r.icon}</TreeIcon>
              {r.label}
            </TreeRow>
          ))}
        </Tree>
        <SideScroll />
        <Splitter />
      </Sidebar>
      <Viewport>
        <Sketch />
        <TaskPane>
          <TaskButton $active><S size={15}><path d="M1 8 L8 1.5 L15 8 M3 8 V14.5 H13 V8 M6.5 14.5 V10 H9.5 V14.5" stroke="#1f5678" strokeWidth="1.2" /></S></TaskButton>
          <TaskButton><S size={15}><path d="M3 4 V13 Q8 16 13 13 V4 M3 4 Q8 1 13 4 M6 3 V15 M10 3 V15" stroke="#555" fill="#f0f0f0" /></S></TaskButton>
          <TaskButton><S size={15}><path d="M1.5 13.5 V3 H6 L7.5 5 H13 V7 M1.5 13.5 L4 7 H15 L12.5 13.5 Z" stroke="#555" fill="#f4f4f4" /></S></TaskButton>
          <TaskButton><S size={15}><rect x="2" y="2.5" width="12" height="11" stroke="#2f5f80" fill="#dfe9f0" /><path d="M2 5 H14" stroke="#2f5f80" strokeWidth="1.5" /><path d="M4 12 L7 8 L9 12" stroke="#2f78a8" /></S></TaskButton>
          <TaskButton><ColorBall /></TaskButton>
          <TaskButton><ListDoc size={15} /></TaskButton>
          <TaskButton><S size={15}><path d="M1.5 3 H11 V9 H5 L3 11 V9 H1.5 Z" fill="#2f78a8" /><path d="M6 7 H14.5 V12.5 H12 V14.5 L10 12.5 H6 Z" fill="#f2f2f2" stroke="#444" /></S></TaskButton>
        </TaskPane>
      </Viewport>
    </Body>

    <SheetRow>
      <NavButtons>
        <NavButton>|◂</NavButton>
        <NavButton>◂</NavButton>
        <NavButton>▸</NavButton>
        <NavButton>▸|</NavButton>
      </NavButtons>
      <SheetTab $w={49} $active>Model</SheetTab>
      <SheetTab $w={59}>3D Views</SheetTab>
      <SheetTab $w={96} $pr={8}>Motion Study 1</SheetTab>
    </SheetRow>
    <StatusBar>
      <StatusTrack>
        SOLIDWORKS Premium 2016 x64 Edition
        <StatusCell $x={866}>-1.25in</StatusCell>
        <StatusCell $x={917}>-0.07in</StatusCell>
        <StatusCell $x={961}>0in</StatusCell>
        <StatusCell $x={988}>Under Defined</StatusCell>
        <StatusCell $x={1065}>Editing Sketch3</StatusCell>
        <StatusCell $x={1181}>IPS</StatusCell>
        <StatusCell $x={1219}><Caret $up /></StatusCell>
        <StatusCell $x={1266}><S size={11}><path d="M2 5 L8 2 L14 6 L9 13 Z" stroke="#666" fill="#ddd" /></S></StatusCell>
      </StatusTrack>
    </StatusBar>
  </Window>
);

export default App;
